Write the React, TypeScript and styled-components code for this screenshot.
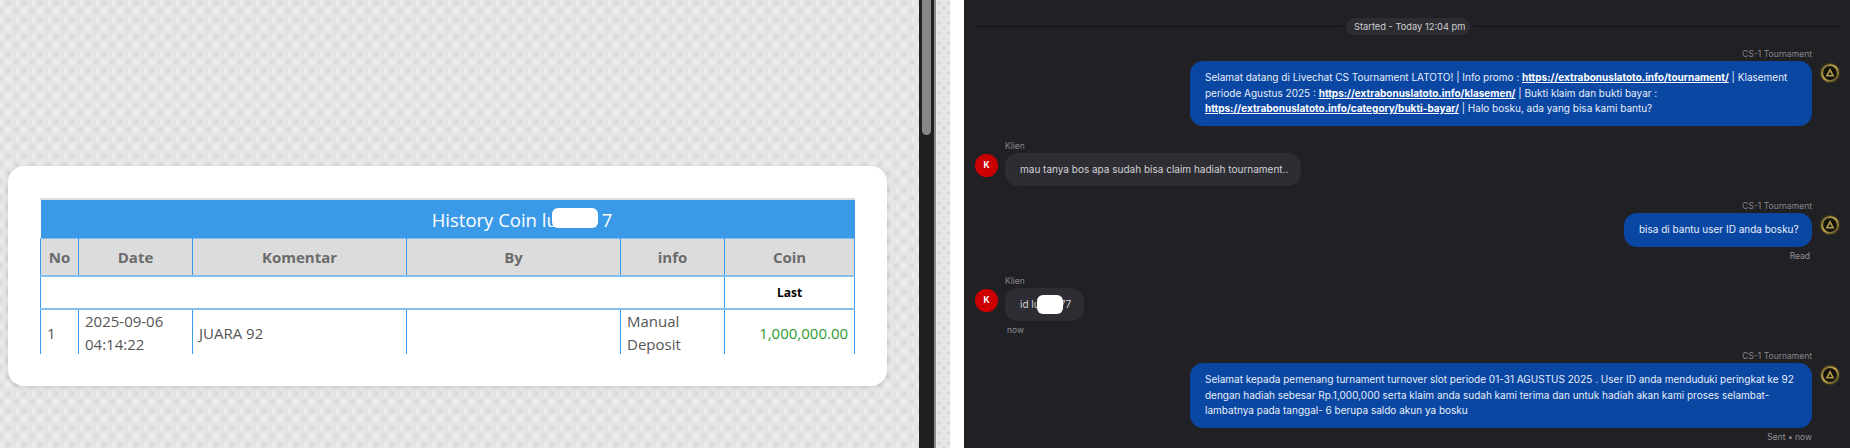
import styled, { createGlobalStyle } from "styled-components";

const GlobalStyle = createGlobalStyle`
  html, body {
    margin: 0;
    padding: 0;
    background: #fff;
    overflow: hidden;
  }
`;

const Page = styled.div`
  display: flex;
  width: 1850px;
  height: 448px;
  overflow: hidden;
`;

const LeftPane = styled.div`
  width: 919px;
  height: 448px;
  box-sizing: border-box;
  padding: 166px 32px 0 8px;
  background-color: #e5e5e5;
  background-image:
    radial-gradient(circle at 8px 3px, #d0d0d0 0, #dcdcdc 1.5px, transparent 3.5px),
    radial-gradient(circle at 0px 11px, #d0d0d0 0, #dcdcdc 1.5px, transparent 3.5px),
    radial-gradient(circle at 16px 11px, #d0d0d0 0, #dcdcdc 1.5px, transparent 3.5px),
    radial-gradient(circle at 0px 3px, #efefef 0, transparent 5px),
    radial-gradient(circle at 8px 11px, #efefef 0, transparent 5px);
  background-size: 16px 17px;
`;

const Card = styled.div`
  height: 220px;
  box-sizing: border-box;
  padding: 32px;
  background: #fff;
  border-radius: 16px;
  box-shadow: 0 1px 5px rgba(0, 0, 0, 0.14);
`;

const TableClip = styled.div`
  height: 156px;
  overflow: hidden;
  border-top: 2px solid #dcdcdc;
  box-sizing: border-box;
`;

const Table = styled.table`
  width: 814px;
  table-layout: fixed;
  border-collapse: collapse;
  font-family: "Open Sans", "Noto Sans", sans-serif;
  color: #555;
`;

const TitleCell = styled.th`
  height: 38px;
  padding: 0 0 0 149px;
  background: #3a9ae8;
  color: #fff;
  font-size: 18.5px;
  font-weight: 400;
  text-align: center;
`;

const TitleText = styled.span`
  position: relative;
  display: inline-block;
`;

const Redaction = styled.span`
  position: absolute;
  background: #fff;
  border-radius: 6px;
`;

const TitleRedaction = styled(Redaction)`
  left: 120px;
  top: 1px;
  width: 46px;
  height: 20px;
`;

const TitleTail = styled.span`
  margin-left: 44px;
`;

const HeadCell = styled.th`
  height: 36px;
  padding: 0;
  background: #dcdcdc;
  border: 1px solid #3a9ae8;
  border-top: 1px solid #85bfee;
  border-bottom: 2px solid #85bfee;
  color: #6b6b6b;
  font-size: 15px;
  font-weight: 700;
  text-align: center;
`;

const Cell = styled.td<{ $align?: string; $color?: string; $weight?: number; $size?: number }>`
  height: 45px;
  padding: 0 6px;
  border: 1px solid #3a9ae8;
  font-size: ${(p) => p.$size ?? 15}px;
  font-weight: ${(p) => p.$weight ?? 400};
  line-height: 23px;
  text-align: ${(p) => p.$align ?? "left"};
  color: ${(p) => p.$color ?? "#555"};
`;

const SubCell = styled(Cell)`
  height: 31px;
  border-bottom: 2px solid #85bfee;
`;

const Gutter = styled.div`
  position: relative;
  width: 15px;
  height: 448px;
  background: #202020;
  border-right: 2px solid #8a8a8a;
`;

const Thumb = styled.div`
  position: absolute;
  left: 3px;
  top: 0;
  width: 9px;
  height: 135px;
  border-radius: 0 0 5px 5px;
  background: #888;
`;

const Strip = styled.div`
  width: 14px;
  height: 448px;
  background-color: #e6e6e6;
  background-image:
    radial-gradient(circle at 3px 3px, #c8c8c8 0, transparent 2px),
    radial-gradient(circle at 8px 8px, #d2d2d2 0, transparent 2px);
  background-size: 10px 10px;
`;

const WhiteGap = styled.div`
  width: 14px;
  height: 448px;
  background: #fff;
`;

const ChatPane = styled.div`
  flex: 1;
  height: 448px;
  box-sizing: border-box;
  padding: 18px 9px 0 11px;
  background: #212125;
  font-family: Inter, "Liberation Sans", sans-serif;
  font-size: 10px;
`;

const Divider = styled.div`
  display: flex;
  align-items: center;
  gap: 4px;
  height: 17px;
  &::before,
  &::after {
    content: "";
    flex: 1;
    height: 1px;
    background: #111113;
  }
`;

const Pill = styled.div`
  display: flex;
  align-items: center;
  width: 124px;
  height: 17px;
  box-sizing: border-box;
  padding-left: 8px;
  border-radius: 9px;
  background: #2c2c31;
  color: #cfcfd2;
  font-size: 9.3px;
  white-space: nowrap;
`;

const Row = styled.div<{ $out?: boolean; $top: number }>`
  display: flex;
  justify-content: ${(p) => (p.$out ? "flex-end" : "flex-start")};
  gap: 7px;
  margin-top: ${(p) => p.$top}px;
`;

const Body = styled.div<{ $out?: boolean }>`
  display: flex;
  flex-direction: column;
  align-items: ${(p) => (p.$out ? "flex-end" : "flex-start")};
`;

const Meta = styled.div<{ $pad?: number }>`
  height: 14px;
  line-height: 14px;
  padding: 0 ${(p) => p.$pad ?? 0}px;
  color: #85858d;
  font-size: 8.5px;
  white-space: nowrap;
`;

const Footer = styled(Meta)`
  margin-top: 2px;
  color: #909096;
`;

const Bubble = styled.div<{ $out?: boolean; $width: number }>`
  position: relative;
  width: ${(p) => p.$width}px;
  box-sizing: border-box;
  padding: 9px 15px;
  border-radius: 13px;
  background: ${(p) => (p.$out ? "#0a47a3" : "#2d2d33")};
  color: ${(p) => (p.$out ? "#e8eefa" : "#d2d2d6")};
  line-height: 15.5px;
  white-space: nowrap;
`;

const BubbleLink = styled.a`
  color: #fff;
  font-weight: 700;
  text-decoration: underline;
`;

const BubbleRedaction = styled(Redaction)`
  left: 32px;
  top: 7px;
  width: 26px;
  height: 19px;
`;

const BubbleTail = styled.span`
  margin-left: 20px;
`;

const ClientAvatar = styled.div`
  display: flex;
  align-items: center;
  justify-content: center;
  flex: none;
  width: 23px;
  height: 23px;
  margin-top: 15px;
  border-radius: 50%;
  background: #cc0000;
  color: #fff;
  font-size: 8.5px;
  font-weight: 700;
`;

const AgentMark = styled.svg`
  flex: none;
  margin-top: 15px;
  filter: blur(0.35px);
`;

const AgentAvatar = () => (
  <AgentMark width="22" height="22" viewBox="0 0 22 22">
    <defs>
      <linearGradient id="agentRing" x1="0" y1="0" x2="1" y2="1">
        <stop offset="0" stopColor="#6b5e2a" />
        <stop offset="0.45" stopColor="#c9ad52" />
        <stop offset="1" stopColor="#4d4520" />
      </linearGradient>
    </defs>
    <circle cx="11" cy="11" r="10.5" fill="#35321f" />
    <circle cx="11" cy="11" r="8" fill="#13120d" stroke="url(#agentRing)" strokeWidth="2.2" />
    <path d="M11 6 L15.4 14.6 H6.6 Z" fill="#b39a45" />
    <path d="M11 9.4 L12.8 13 H9.2 Z" fill="#1a1810" />
  </AgentMark>
);

const Sep = () => <>|</>;

export default function App() {
  return (
    <Page>
      <GlobalStyle />
      <LeftPane>
        <Card>
          <TableClip>
            <Table>
              <colgroup>
                <col width="38" />
                <col width="114" />
                <col width="214" />
                <col width="214" />
                <col width="104" />
                <col width="130" />
              </colgroup>
              <thead>
                <tr>
                  <TitleCell colSpan={6}>
                    <TitleText>
                      History Coin lu
                      <TitleRedaction />
                      <TitleTail>7</TitleTail>
                    </TitleText>
                  </TitleCell>
                </tr>
                <tr>
                  <HeadCell>No</HeadCell>
                  <HeadCell>Date</HeadCell>
                  <HeadCell>Komentar</HeadCell>
                  <HeadCell>By</HeadCell>
                  <HeadCell>info</HeadCell>
                  <HeadCell>Coin</HeadCell>
                </tr>
              </thead>
              <tbody>
                <tr>
                  <SubCell colSpan={5} />
                  <SubCell $align="center" $color="#000" $weight={700} $size={12}>
                    Last
                  </SubCell>
                </tr>
                <tr>
                  <Cell>1</Cell>
                  <Cell>
                    2025-09-06
                    <br />
                    04:14:22
                  </Cell>
                  <Cell>JUARA 92</Cell>
                  <Cell />
                  <Cell>
                    Manual
                    <br />
                    Deposit
                  </Cell>
                  <Cell $align="right" $color="#2e9a2e">
                    1,000,000.00
                  </Cell>
                </tr>
              </tbody>
            </Table>
          </TableClip>
        </Card>
      </LeftPane>
      <Gutter>
        <Thumb />
      </Gutter>
      <Strip />
      <WhiteGap />
      <ChatPane>
        <Divider>
          <Pill>Started - Today 12:04 pm</Pill>
        </Divider>

        <Row $out $top={12}>
          <Body $out>
            <Meta>CS-1 Tournament</Meta>
            <Bubble $out $width={622}>
              Selamat datang di Livechat CS Tournament LATOTO! <Sep /> Info promo :{" "}
              <BubbleLink>https://extrabonuslatoto.info/tournament/</BubbleLink> <Sep /> Klasement
              <br />
              periode Agustus 2025 : <BubbleLink>https://extrabonuslatoto.info/klasemen/</BubbleLink>{" "}
              <Sep /> Bukti klaim dan bukti bayar :
              <br />
              <BubbleLink>https://extrabonuslatoto.info/category/bukti-bayar/</BubbleLink> <Sep /> Halo
              bosku, ada yang bisa kami bantu?
            </Bubble>
          </Body>
          <AgentAvatar />
        </Row>

        <Row $top={13}>
          <ClientAvatar>K</ClientAvatar>
          <Body>
            <Meta>Klien</Meta>
            <Bubble $width={296}>mau tanya bos apa sudah bisa claim hadiah tournament..</Bubble>
          </Body>
        </Row>

        <Row $out $top={13}>
          <Body $out>
            <Meta>CS-1 Tournament</Meta>
            <Bubble $out $width={188}>
              bisa di bantu user ID anda bosku?
            </Bubble>
            <Footer $pad={2}>Read</Footer>
          </Body>
          <AgentAvatar />
        </Row>

        <Row $top={11}>
          <ClientAvatar>K</ClientAvatar>
          <Body>
            <Meta>Klien</Meta>
            <Bubble $width={79}>
              id lu
              <BubbleRedaction />
              <BubbleTail>77</BubbleTail>
            </Bubble>
            <Footer $pad={2}>now</Footer>
          </Body>
        </Row>

        <Row $out $top={12}>
          <Body $out>
            <Meta>CS-1 Tournament</Meta>
            <Bubble $out $width={622}>
              Selamat kepada pemenang turnament turnover slot periode 01-31 AGUSTUS 2025 . User ID anda
              menduduki peringkat ke 92
              <br />
              dengan hadiah sebesar Rp.1,000,000 serta klaim anda sudah kami terima dan untuk hadiah akan
              kami proses selambat-
              <br />
              lambatnya pada tanggal- 6 berupa saldo akun ya bosku
            </Bubble>
            <Footer>Sent • now</Footer>
          </Body>
          <AgentAvatar />
        </Row>
      </ChatPane>
    </Page>
  );
}
